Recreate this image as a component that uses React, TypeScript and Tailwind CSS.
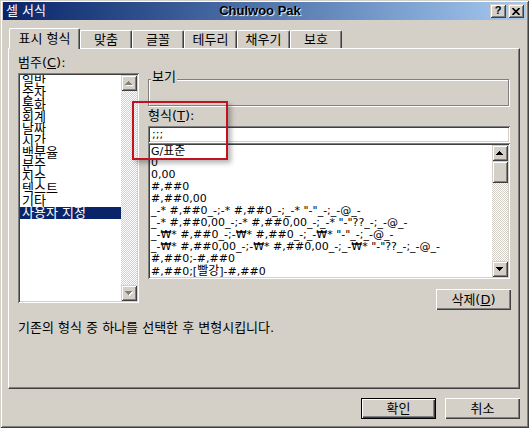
import React from "react";

const sunken =
  "shadow-[inset_1px_1px_#808080,inset_-1px_-1px_#ffffff,inset_2px_2px_#404040,inset_-2px_-2px_#d4d0c8]";
const raisedBtn =
  "shadow-[inset_1px_1px_#ffffff,inset_-1px_-1px_#404040,inset_-2px_-2px_#808080]";
const raisedScroll =
  "shadow-[inset_1px_1px_#d4d0c8,inset_-1px_-1px_#404040,inset_2px_2px_#ffffff,inset_-2px_-2px_#808080]";
const dither =
  "bg-[image:repeating-conic-gradient(#d4d0c8_0_25%,#ffffff_0_50%)] bg-[length:2px_2px]";

function Tri({ up, color }: { up: boolean; color: string }) {
  const rows = up
    ? [
        [3, 1],
        [2, 3],
        [1, 5],
        [0, 7],
      ]
    : [
        [0, 7],
        [1, 5],
        [2, 3],
        [3, 1],
      ];
  return (
    <>
      {rows.map(([x, w], i) => (
        <rect key={i} x={x} y={i} width={w} height={1} fill={color} />
      ))}
    </>
  );
}

function ScrollBtn({ up, disabled }: { up: boolean; disabled?: boolean }) {
  return (
    <div
      className={`w-[16px] h-[16px] shrink-0 bg-[#d4d0c8] flex items-center justify-center ${raisedScroll}`}
    >
      <svg width="8" height="5" viewBox="0 0 8 5" shapeRendering="crispEdges">
        {disabled ? (
          <>
            <g transform="translate(1,1)">
              <Tri up={up} color="#ffffff" />
            </g>
            <Tri up={up} color="#808080" />
          </>
        ) : (
          <Tri up={up} color="#000000" />
        )}
      </svg>
    </div>
  );
}

const categories = [
  "일반",
  "숫자",
  "통화",
  "회계",
  "날짜",
  "시간",
  "백분율",
  "분수",
  "지수",
  "텍스트",
  "기타",
  "사용자 지정",
];

const formats: React.ReactNode[] = [
  <>
    G/<span className="text-[12px] leading-[12px]">표준</span>
  </>,
  "0",
  "0,00",
  "#,##0",
  "#,##0,00",
  '_-* #,##0_-;-* #,##0_-;_-* "-"_-;_-@_-',
  '_-* #,##0,00_-;-* #,##0,00_-;_-* "-"??_-;_-@_-',
  '_-₩* #,##0_-;-₩* #,##0_-;_-₩* "-"_-;_-@_-',
  '_-₩* #,##0,00_-;-₩* #,##0,00_-;_-₩* "-"??_-;_-@_-',
  "#,##0;-#,##0",
  <>
    #,##0;[<span className="text-[12px] leading-[12px]">빨강</span>]-#,##0
  </>,
];

const tabs = [
  { label: "맞춤", w: "w-[52px]" },
  { label: "글꼴", w: "w-[52px]" },
  { label: "테두리", w: "w-[53px]" },
  { label: "채우기", w: "w-[53px]" },
  { label: "보호", w: "w-[52px]" },
];

export default function App() {
  return (
    <div
      className={`relative w-[529px] h-[428px] bg-[#d4d0c8] pt-[2px] px-[3px] text-black text-[13px] font-['DejaVu_Sans','Noto_Sans_CJK_KR',sans-serif] shadow-[inset_1px_1px_#d4d0c8,inset_-1px_-1px_#404040,inset_2px_2px_#ffffff,inset_-2px_-2px_#808080] overflow-hidden`}
    >
      {/* Title bar */}
      <div className="h-[18px] bg-linear-to-r from-[#0a246a] to-[#a6caf0] grid grid-cols-[1fr_auto_1fr] items-center">
        <span className="pl-[3px] text-white text-[13px] leading-[18px] whitespace-nowrap">
          셀 서식
        </span>
        <span className="mr-[9px] font-['Liberation_Sans',sans-serif] font-bold text-[13px] leading-[18px] text-black [text-shadow:1px_1px_1px_#ffffff]">
          Chulwoo Pak
        </span>
        <div className="flex justify-end gap-[2px] pr-[2px]">
          <div
            className={`w-[16px] h-[14px] bg-[#d4d0c8] flex items-center justify-center ${raisedScroll}`}
          >
            <span className="font-['Liberation_Sans',sans-serif] font-bold text-[11px] leading-[11px] pb-[1px]">
              ?
            </span>
          </div>
          <div
            className={`w-[16px] h-[14px] bg-[#d4d0c8] flex items-center justify-center ${raisedScroll}`}
          >
            <svg width="8" height="7" viewBox="0 0 8 7">
              <path d="M0.5 0 L7.5 7 M7.5 0 L0.5 7" stroke="#000" strokeWidth="1.6" />
            </svg>
          </div>
        </div>
      </div>

      {/* Dialog body */}
      <div className="ml-[5px] w-[512px] mt-[8px]">
        {/* Tabs */}
        <div className="flex items-end h-[20px] pl-[1px]">
          <div className="relative z-10 -mb-px h-[21px] w-[71px] bg-[#d4d0c8] border-t border-l border-white border-r border-r-[#404040] rounded-t-[2px] shadow-[inset_-1px_0_#808080] flex items-center justify-center leading-[14px] whitespace-nowrap">
            표시 형식
          </div>
          {tabs.map((t) => (
            <div
              key={t.label}
              className={`h-[18px] ${t.w} bg-[#d4d0c8] border-t border-l border-white border-r border-r-[#404040] rounded-t-[2px] shadow-[inset_-1px_0_#808080] flex items-center justify-center leading-[14px] whitespace-nowrap`}
            >
              {t.label}
            </div>
          ))}
        </div>

        {/* Panel */}
        <div className="h-[341px] border-t border-l border-white border-r border-b border-r-[#404040] border-b-[#404040] shadow-[inset_-1px_-1px_#808080] pl-[9px] pt-[7px]">
          <div className="flex items-start">
            {/* Left column */}
            <div className="flex flex-col w-[121px]">
              <div className="h-[17px] leading-[14px] whitespace-nowrap">
                범주(<span className="underline">C</span>):
              </div>
              <div className={`h-[230px] w-[121px] p-[2px] bg-white flex ${sunken}`}>
                <div className="flex-1 bg-white overflow-hidden">
                  {categories.map((c, i) => (
                    <div
                      key={c}
                      className={
                        i === 11
                          ? "h-[12px] leading-[12px] pl-[2px] whitespace-nowrap bg-[#0a246a] text-white"
                          : "h-[12px] leading-[12px] pl-[2px] whitespace-nowrap"
                      }
                    >
                      {c}
                    </div>
                  ))}
                </div>
                <div className="w-[16px] flex flex-col">
                  <ScrollBtn up disabled />
                  <div className={`flex-1 ${dither}`} />
                  <ScrollBtn up={false} disabled />
                </div>
              </div>
            </div>

            {/* Right column */}
            <div className="ml-[9px] w-[362px] flex flex-col">
              <div className="relative mt-[23px] h-[27px] w-[361px] border border-[#808080] shadow-[inset_1px_1px_#ffffff,1px_1px_#ffffff]">
                <span className="absolute -top-[10px] left-[2px] px-[1px] bg-[#d4d0c8] leading-[14px]">
                  보기
                </span>
              </div>
              <div className="h-[20px] leading-[20px] whitespace-nowrap">
                형식(<span className="underline">T</span>):
              </div>
              <div className={`h-[17px] w-[362px] p-[2px] bg-white ${sunken}`}>
                <div className="pl-[2px] text-[11px] leading-[13px] bg-white h-full">;;;</div>
              </div>
              <div className={`h-[136px] w-[362px] p-[2px] bg-white flex ${sunken}`}>
                <div className="flex-1 bg-white overflow-hidden text-[11px]">
                  {formats.map((f, i) => (
                    <div key={i} className="h-[12px] leading-[12px] pl-[1px] whitespace-nowrap">
                      {f}
                    </div>
                  ))}
                </div>
                <div className="w-[16px] flex flex-col">
                  <ScrollBtn up />
                  <div className={`h-[22px] shrink-0 bg-[#d4d0c8] ${raisedScroll}`} />
                  <div className={`flex-1 ${dither}`} />
                  <ScrollBtn up={false} />
                </div>
              </div>
              <div
                className={`mt-[10px] self-end -mr-[1px] w-[75px] h-[21px] bg-[#d4d0c8] flex items-center justify-center leading-[14px] ${raisedBtn}`}
              >
                삭제(<span className="underline">D</span>)
              </div>
            </div>
          </div>
          <div className="mt-[11px] leading-[14px] whitespace-nowrap">
            기존의 형식 중 하나를 선택한 후 변형시킵니다.
          </div>
        </div>

        {/* Bottom buttons */}
        <div className="mt-[9px] flex justify-end gap-[9px]">
          <div
            className={`w-[75px] h-[21px] bg-[#d4d0c8] border border-black flex items-center justify-center leading-[14px] ${raisedBtn}`}
          >
            확인
          </div>
          <div
            className={`w-[75px] h-[21px] bg-[#d4d0c8] flex items-center justify-center leading-[14px] ${raisedBtn}`}
          >
            취소
          </div>
        </div>
      </div>

      {/* Red annotation rectangle */}
      <div className="absolute left-[132px] top-[101px] w-[96px] h-[59px] border-2 border-[#c1121f] shadow-[3px_3px_5px_rgba(0,0,0,0.3)] pointer-events-none" />
    </div>
  );
}
